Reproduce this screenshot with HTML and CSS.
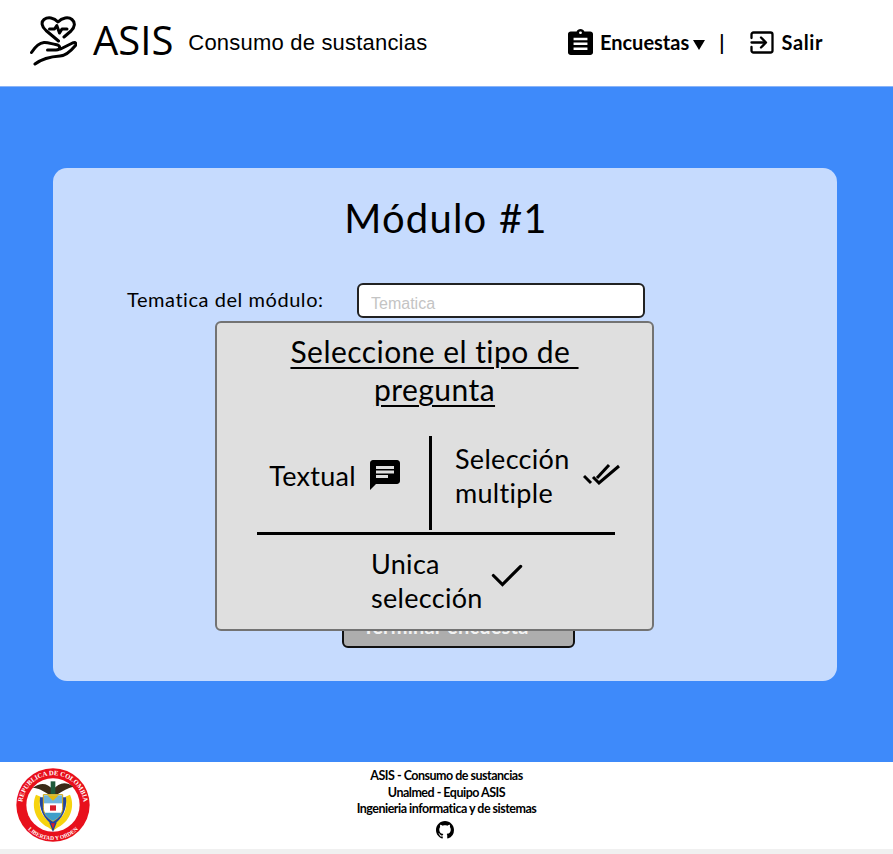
FILE: index.html
```html
<!DOCTYPE html>
<html lang="es">
<head>
<meta charset="utf-8">
<title>ASIS - Consumo de sustancias</title>
<link rel="stylesheet" href="styles.css">
</head>
<body>
<header class="topbar">
  <div class="brand">
    <svg class="brand-icon" viewBox="30 14 47 50" fill="none" stroke="#000" stroke-width="3" stroke-linecap="round" stroke-linejoin="round">
      <path d="M58.500 39 L46 28.500 C41.500 24.500 41 20 44 17.500 C48 14.500 54 15.500 58 20 C62 15.500 68.500 14.500 72 17.500 C75.500 20.500 75 25 71 29 L64 35"/>
      <path d="M49.500 27 H54.500 L56.800 23.500 L59.500 31 L62 27 H67"/>
      <path d="M31.500 50.500 C35 45 39 41 44 40.500 C48 40.200 52 42 55.500 42.500 C61 43.200 61 48 56 48 H47.500"/>
      <path d="M60.500 47 L72.500 41 C76 39.800 77 42 75 44 C70 50 66 53.500 60 54 C52 54.500 43 56 35 62"/>
    </svg>
    <span class="brand-name">ASIS</span>
    <span class="brand-sub">Consumo de sustancias</span>
  </div>
  <nav class="nav">
    <a class="nav-item">
      <svg class="nav-icon nav-icon-clip" viewBox="3 1 18 21" preserveAspectRatio="none"><path d="M19 3h-4.180C14.400 1.840 13.300 1 12 1s-2.400.84-2.820 2H5c-1.100 0-2 .9-2 2v15c0 1.100.9 2 2 2h14c1.100 0 2-.9 2-2V5c0-1.100-.9-2-2-2zm-7 0c.55 0 1 .45 1 1s-.45 1-1 1-1-.45-1-1 .45-1 1-1zm5 15H7v-2h10v2zm0-4H7v-2h10v2zm0-4H7V8h10v2z"/></svg>
      <span>Encuestas</span>
      <span class="caret"></span>
    </a>
    <span class="nav-sep">|</span>
    <a class="nav-item nav-exit">
      <svg class="nav-icon" viewBox="0 0 24 24" fill="none" stroke="#000" stroke-width="2.300" stroke-linecap="round" stroke-linejoin="round"><path d="M1.500 8V4.500a2 2 0 0 1 2-2h17a2 2 0 0 1 2 2v16a2 2 0 0 1-2 2h-17a2 2 0 0 1-2-2V17"/><path d="M1.500 12.500H15"/><path d="M11 7.500l5 5-5 5"/></svg>
      <span class="nav-exit-label">Salir</span>
    </a>
  </nav>
</header>

<main class="stage">
  <section class="card">
    <h1 class="card-title">Módulo #1</h1>
    <div class="field">
      <label class="field-label" for="tema">Tematica del módulo:</label>
      <input class="field-input" id="tema" type="text" placeholder="Tematica">
    </div>
    <button class="finish">Terminar encuesta
      <svg class="finish-icon" viewBox="0 0 16 16" fill="none" stroke="#fff" stroke-width="2" stroke-linecap="round" stroke-linejoin="round"><path d="M3 5.500l5 5 5-5"/></svg>
    </button>

    <div class="modal">
      <h2 class="modal-title">Seleccione el tipo de&nbsp;<br>pregunta</h2>
      <div class="types">
        <div class="type type-text">
          <span class="type-label">Textual</span>
          <svg class="type-icon type-icon-note" viewBox="0 0 24 24"><path d="M20 2H4c-1.100 0-1.990.9-1.990 2L2 22l4-4h14c1.100 0 2-.9 2-2V4c0-1.100-.9-2-2-2zM6 9h12v2H6V9zm8 5H6v-2h8v2zm4-6H6V6h12v2z"/></svg>
        </div>
        <div class="type type-multi">
          <span class="type-label">Selección<br>multiple</span>
          <svg class="type-icon type-icon-wide" viewBox="582 464 38 22" fill="none" stroke="#000" stroke-width="3"><path d="M583 477l7 7"/><path d="M592 478l6 6 20-17"/><path d="M596 479l12-13"/></svg>
        </div>
        <div class="type type-single">
          <span class="type-label">Unica<br>selección</span>
          <svg class="type-icon type-icon-check" viewBox="0 0 28 22" fill="none" stroke="#000" stroke-width="2.800" stroke-linecap="round"><path d="M2 11l8 8L26 3"/></svg>
        </div>
      </div>
    </div>
  </section>
</main>

<footer class="footer">
  <svg class="emblem" viewBox="0 0 246 246">
    <defs>
      <path id="arcTop" d="M31 140 A93 93 0 1 1 215 140"/>
      <path id="arcBottom" d="M42 190 A105 105 0 0 0 204 190"/>
    </defs>
    <circle cx="123" cy="123" r="110" fill="#e8101c"/>
    <circle cx="123" cy="123" r="80" fill="#fff"/>
    <text class="emblem-text"><textPath href="#arcTop" startOffset="50%" text-anchor="middle">REPUBLICA DE COLOMBIA</textPath></text>
    <text class="emblem-text emblem-text-low"><textPath href="#arcBottom" startOffset="50%" text-anchor="middle">LIBERTAD Y ORDEN</textPath></text>
    <path d="M123 78 C105 55 85 55 62 72 C80 72 92 80 108 90 H138 C154 80 166 72 184 68 C162 52 140 55 123 78Z" fill="#3a2a18"/>
    <path d="M116 52h14v38h-14z" fill="#1d5a3a"/>
    <path d="M72 92 C58 122 66 168 108 190 L123 200 L138 190 C180 168 188 122 174 92 L160 98 C168 130 160 158 123 180 C86 158 78 130 86 98Z" fill="#f6d30f"/>
    <path d="M84 100 C80 135 95 165 123 184 C151 165 166 135 162 100Z" fill="#2144a0"/>
    <path d="M94 92 H152 V130 C152 150 140 162 123 172 C106 162 94 150 94 130Z" fill="#fff" stroke="#caa30e" stroke-width="3"/>
    <path d="M96 94 H150 V118 H96Z" fill="#6fb4dc"/>
    <path d="M106 94l17 16 17-16z" fill="#e3b90f"/>
    <path d="M114 124h18v16h-18z" fill="#d81e2a"/>
    <path d="M98 146 H148 C144 158 136 164 123 171 C110 164 102 158 98 146Z" fill="#3f9ec9"/>
    <path d="M112 176 L123 204 L134 176Z" fill="#1a3f99"/>
    <path d="M117 178 L123 194 L129 178Z" fill="#d81e2a"/>
  </svg>
  <div class="footer-text">
    <p>ASIS - Consumo de sustancias</p>
    <p>Unalmed - Equipo ASIS</p>
    <p>Ingenieria informatica y de sistemas</p>
    <svg class="github" viewBox="0 0 16 16"><path d="M8 0C3.580 0 0 3.580 0 8c0 3.540 2.290 6.530 5.470 7.590.4.070.55-.17.55-.38 0-.19-.01-.82-.01-1.490-2.010.37-2.530-.49-2.690-.94-.09-.23-.48-.94-.82-1.130-.28-.15-.68-.52-.01-.53.630-.01 1.080.58 1.230.82.720 1.210 1.870.87 2.330.66.070-.52.280-.87.510-1.070-1.780-.2-3.640-.89-3.640-3.950 0-.87.310-1.590.820-2.150-.08-.2-.36-1.020.08-2.120 0 0 .67-.21 2.200.82.640-.18 1.320-.27 2-.27s1.360.09 2 .27c1.530-1.040 2.200-.82 2.200-.82.440 1.100.16 1.920.08 2.120.51.560.82 1.270.82 2.150 0 3.070-1.870 3.750-3.650 3.950.29.250.54.730.54 1.480 0 1.070-.01 1.930-.01 2.200 0 .21.150.46.550.38A8.010 8.010 0 0 0 16 8c0-4.420-3.580-8-8-8z"/></svg>
  </div>
</footer>
<div class="strip"></div>
</body>
</html>
```
FILE: styles.css
```css
* { box-sizing: border-box; }
html, body { margin: 0; padding: 0; }
body {
  width: 893px;
  height: 854px;
  overflow: hidden;
  background: #f0f0f0;
  font-family: "Lato", "Liberation Sans", sans-serif;
  color: #000;
  display: flex;
  flex-direction: column;
}
.topbar {
  height: 87px;
  flex: none;
  background: #fff;
  border-bottom: 1px solid #8ab4f8;
  display: flex;
  align-items: center;
  justify-content: space-between;
  padding: 0 70px 0 30px;
}
.brand { display: flex; align-items: center; }
.brand-icon { width: 47px; height: 50px; margin-top: -5px; }
.brand-name {
  font-family: "Open Sans", sans-serif;
  font-size: 40px;
  line-height: 1;
  margin-left: 16px;
  margin-top: -6px;
}
.brand-sub {
  font-family: "Liberation Sans", sans-serif;
  font-size: 22px;
  letter-spacing: .2px;
  margin-left: 15px;
}
.nav { display: flex; align-items: center; font-weight: 700; font-size: 20px; padding-bottom: 2px; }
.nav-item { display: flex; align-items: center; }
.nav-icon { width: 24px; height: 26px; margin-right: 8px; }
.nav-icon-clip { width: 25px; height: 26px; margin-right: 7px; }
.nav-exit-label { letter-spacing: .6px; }
.caret {
  width: 0;
  height: 0;
  margin-left: 4px;
  margin-top: 6px;
  border-left: 6px solid transparent;
  border-right: 6px solid transparent;
  border-top: 10px solid #000;
}
.nav-sep { margin: 0 25px 0 14px; }
.stage {
  height: 675px;
  flex: none;
  background: #3e8afa;
  padding: 81px 56px 81px 53px;
}
.card {
  position: relative;
  height: 513px;
  background: #c6dbfe;
  border-radius: 14px;
  display: flex;
  flex-direction: column;
  align-items: center;
  padding-top: 26px;
}
.card-title { margin: 0; font-size: 40px; font-weight: 400; line-height: 48px; letter-spacing: 1.200px; padding-left: 2px; }
.field {
  align-self: flex-start;
  display: flex;
  align-items: center;
  margin: 41px 0 0 74px;
}
.field-label { font-size: 20px; width: 230px; letter-spacing: .55px; margin-top: -3px; }
.field-input {
  width: 288px;
  height: 35px;
  border: 2px solid #222;
  border-radius: 6px;
  background: #fff;
  padding: 7px 12px 0;
  font-family: "Liberation Sans", sans-serif;
  font-size: 16px;
}
.field-input::placeholder { color: #c4c4c4; opacity: 1; }
.finish {
  position: absolute;
  left: 289px;
  bottom: 33px;
  width: 233px;
  height: 48px;
  border: 2px solid #111;
  border-radius: 6px;
  background: #adadad;
  color: #f2f2f2;
  font-family: "Lato", sans-serif;
  font-size: 20px;
  font-weight: 700;
  letter-spacing: .2px;
  padding-top: 5px;
  display: flex;
  align-items: center;
  justify-content: center;
  gap: 10px;
}
.finish-icon { width: 16px; height: 16px; }
.modal {
  position: absolute;
  left: 162px;
  top: 153px;
  width: 439px;
  height: 310px;
  background: #dfdfdf;
  border: 2px solid #737373;
  border-radius: 6px;
  padding: 9px 40px 0;
}
.modal-title {
  margin: 0 auto;
  text-align: center;
  font-size: 30px;
  font-weight: 400;
  line-height: 38px;
  letter-spacing: .45px;
  text-decoration: underline;
  text-decoration-thickness: 2px;
  text-underline-offset: 4px;
}
.types {
  display: grid;
  grid-template-columns: 175px 183px;
  grid-template-rows: 94px 97px;
  margin-top: 28px;
}
.type { display: flex; align-items: center; font-size: 27px; line-height: 34px; letter-spacing: .3px; }
.type-text {
  border-right: 3px solid #000;
  justify-content: flex-end;
  padding: 0 26px 14px 0;
  gap: 11px;
}
.type-multi { padding: 0 0 14px 23px; gap: 13px; }
.type-single {
  grid-column: 1 / 3;
  border-top: 3px solid #000;
  margin-top: 2px;
  padding-left: 114px;
  gap: 8px;
}
.type-icon { width: 36px; height: 36px; flex: none; }
.type-icon-note { margin-top: -2px; }
.type-icon-wide { width: 38px; height: 22px; margin-top: -4px; }
.type-icon-check { width: 32px; height: 25px; margin-top: -12px; }
.footer {
  height: 87px;
  flex: none;
  background: #fff;
  position: relative;
  display: flex;
  justify-content: center;
  padding-top: 6px;
}
.emblem { position: absolute; left: 12px; top: 2px; width: 82px; height: 82px; }
.emblem-text { font-family: "Liberation Serif", serif; font-size: 20px; font-weight: 700; fill: #fff; }
.emblem-text-low { font-size: 17px; }
.footer-text { text-align: center; font-size: 12.500px; font-weight: 700; line-height: 16.500px; letter-spacing: -.5px; }
.footer-text p { margin: 0; }
.github { width: 18px; height: 18px; display: block; margin: 3px 0 0 calc(50% - 10px); }
.strip { flex: 1; background: #f0f0f0; }
```
